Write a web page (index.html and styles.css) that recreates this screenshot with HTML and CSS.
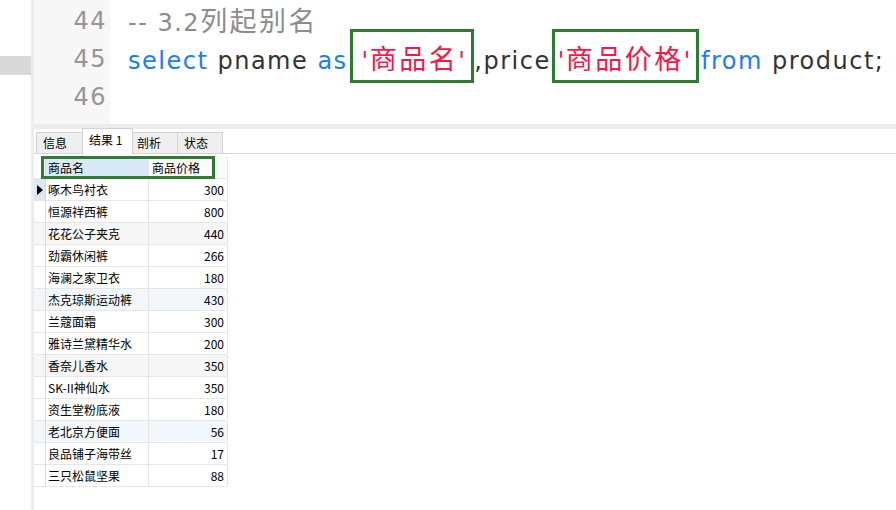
FILE: index.html
```html
<!DOCTYPE html>
<html lang="zh-CN">
<head>
<meta charset="utf-8">
<title>Navicat 查询结果</title>
<link rel="stylesheet" href="styles.css">
</head>
<body>
<div class="app">
  <div class="side"><div class="side-mark"></div></div>
  <div class="divider"></div>
  <div class="main">
    <div class="editor">
      <div class="gutter">
        <div class="ln">44</div>
        <div class="ln">45</div>
        <div class="ln">46</div>
      </div>
      <div class="code">
        <div class="line"><span class="cm">-- 3.2<span class="cjk">列起别名</span></span></div>
        <div class="line"><span class="kw">select</span> <span class="id">pname</span> <span class="kw">as</span><span class="str box1">'<span class="cjk">商品名</span>'</span><span class="id">,price</span><span class="str box2">'<span class="cjk">商品价格</span>'</span> <span class="kw">from</span> <span class="id">product;</span></div>
        <div class="line"></div>
      </div>
    </div>
    <div class="sep"></div>
    <div class="tabs">
      <div class="tab t1">信息</div>
      <div class="tab t2 active">结果 1</div>
      <div class="tab t3">剖析</div>
      <div class="tab t4">状态</div>
    </div>
    <div class="result">
      <div class="grid">
        <div class="row head">
          <div class="rh"></div>
          <div class="c1 sel">商品名</div>
          <div class="c2">商品价格</div>
        </div>
        <div class="row cur"><div class="rh"><span class="tri"></span></div><div class="c1">啄木鸟衬衣</div><div class="c2 num">300</div></div>
        <div class="row"><div class="rh"></div><div class="c1">恒源祥西裤</div><div class="c2 num">800</div></div>
        <div class="row gray"><div class="rh"></div><div class="c1">花花公子夹克</div><div class="c2 num">440</div></div>
        <div class="row"><div class="rh"></div><div class="c1">劲霸休闲裤</div><div class="c2 num">266</div></div>
        <div class="row"><div class="rh"></div><div class="c1">海澜之家卫衣</div><div class="c2 num">180</div></div>
        <div class="row blue"><div class="rh"></div><div class="c1">杰克琼斯运动裤</div><div class="c2 num">430</div></div>
        <div class="row"><div class="rh"></div><div class="c1">兰蔻面霜</div><div class="c2 num">300</div></div>
        <div class="row"><div class="rh"></div><div class="c1">雅诗兰黛精华水</div><div class="c2 num">200</div></div>
        <div class="row gray"><div class="rh"></div><div class="c1">香奈儿香水</div><div class="c2 num">350</div></div>
        <div class="row"><div class="rh"></div><div class="c1">SK-II神仙水</div><div class="c2 num">350</div></div>
        <div class="row"><div class="rh"></div><div class="c1">资生堂粉底液</div><div class="c2 num">180</div></div>
        <div class="row blue"><div class="rh"></div><div class="c1">老北京方便面</div><div class="c2 num">56</div></div>
        <div class="row"><div class="rh"></div><div class="c1">良品铺子海带丝</div><div class="c2 num">17</div></div>
        <div class="row"><div class="rh"></div><div class="c1">三只松鼠坚果</div><div class="c2 num">88</div></div>
      </div>
    </div>
  </div>
</div>
</body>
</html>
```

FILE: styles.css
```css
* { box-sizing: border-box; }
html, body {
  margin: 0;
  padding: 0;
  background: #ffffff;
}
body {
  width: 896px;
  height: 510px;
  overflow: hidden;
  font-family: "Noto Sans CJK SC", "Noto Sans", sans-serif;
}
.app {
  display: flex;
  height: 510px;
}
.side {
  width: 31px;
  flex: none;
  background: #ffffff;
}
.side-mark {
  margin-top: 56px;
  height: 19px;
  background: #d9d9d9;
}
.divider {
  width: 3px;
  flex: none;
  background: #ececec;
}
.main {
  flex: 1;
  display: flex;
  flex-direction: column;
  min-width: 0;
}
.editor {
  display: flex;
  height: 124px;
  flex: none;
}
.gutter {
  width: 76px;
  flex: none;
  background: #f7f7f7;
  padding-top: 2px;
  padding-right: 3px;
  text-align: right;
  font-family: "DejaVu Sans", sans-serif;
  font-size: 24px;
  color: #959595;
}
.ln {
  height: 38px;
  line-height: 38px;
  letter-spacing: 1.5px;
}
.code {
  flex: 1;
  min-width: 0;
  padding-top: 1px;
  padding-left: 18px;
  font-family: "DejaVu Sans", "Noto Sans CJK SC", sans-serif;
  font-size: 24px;
  letter-spacing: 1.5px;
}
.line {
  height: 38px;
  line-height: 38px;
  white-space: pre;
}
.cjk {
  font-family: "Noto Sans CJK SC", sans-serif;
  font-size: 27px;
  letter-spacing: 2.5px;
}
.cm { color: #8c8c8c; }
.kw { color: #1c7cf9; }
.id { color: #333333; }
.str {
  color: #f51848;
  position: relative;
}
.box1 { padding: 0 8px 0 12px; margin-left: 2px; }
.box2 { padding: 0 7px 0 6px; margin-left: 1px; margin-right: -7px; }
.str::after {
  content: "";
  position: absolute;
  left: 0;
  right: 0;
  top: -18px;
  bottom: -8px;
  border: 3px solid #2f7b32;
}
.sep {
  height: 5px;
  flex: none;
  background: #ececec;
}
.tabs {
  display: flex;
  align-items: flex-end;
  height: 25px;
  flex: none;
  padding-left: 2px;
  border-bottom: 1px solid #d6d6d6;
  font-size: 12px;
  color: #000;
}
.tab {
  height: 21px;
  line-height: 19px;
  padding-left: 6px;
  background: #efefef;
  border: 1px solid #d2d2d2;
  border-bottom: none;
  margin-right: -1px;
}
.t1 { width: 47px; }
.t2 { width: 51px; }
.t3 { width: 46px; padding-left: 4px; }
.t4 { width: 46px; }
.tab.active {
  line-height: 22px;
  background: #ffffff;
  position: relative;
  margin-bottom: -1px;
  height: 26px;
}
.result {
  flex: 1;
  padding-top: 3px;
}
.grid {
  display: flex;
  flex-direction: column;
  width: 193px;
  font-size: 12px;
  color: #000;
}
.row {
  display: flex;
  height: 22px;
  border-bottom: 1px solid #e6e6e6;
}
.rh {
  width: 12px;
  flex: none;
  border-right: 1px solid #dcdcdc;
  position: relative;
}
.c1 {
  width: 103px;
  flex: none;
  padding-left: 2px;
  line-height: 21px;
  border-right: 1px solid #e6e6e6;
  white-space: nowrap;
}
.c2 {
  width: 79px;
  flex: none;
  padding: 0 3px 0 3px;
  line-height: 21px;
  border-right: 1px solid #e6e6e6;
  white-space: nowrap;
}
.num { text-align: right; }
.head { position: relative; }
.head .c1.sel { background: #d9e8f6; }
.head .c2 { background: #fbfbfb; }
.head::after {
  content: "";
  position: absolute;
  left: 7px;
  top: -1px;
  width: 168px;
  bottom: -1px;
  border: 3px solid #2f7b32;
}
.row.gray { background: #f6f6f6; }
.row.blue { background: #f2f7fc; }
.cur .rh { background: #dbe9f6; }
.tri {
  position: absolute;
  left: 3px;
  top: 6px;
  width: 0;
  height: 0;
  border-top: 5px solid transparent;
  border-bottom: 5px solid transparent;
  border-left: 6px solid #000;
}
```
